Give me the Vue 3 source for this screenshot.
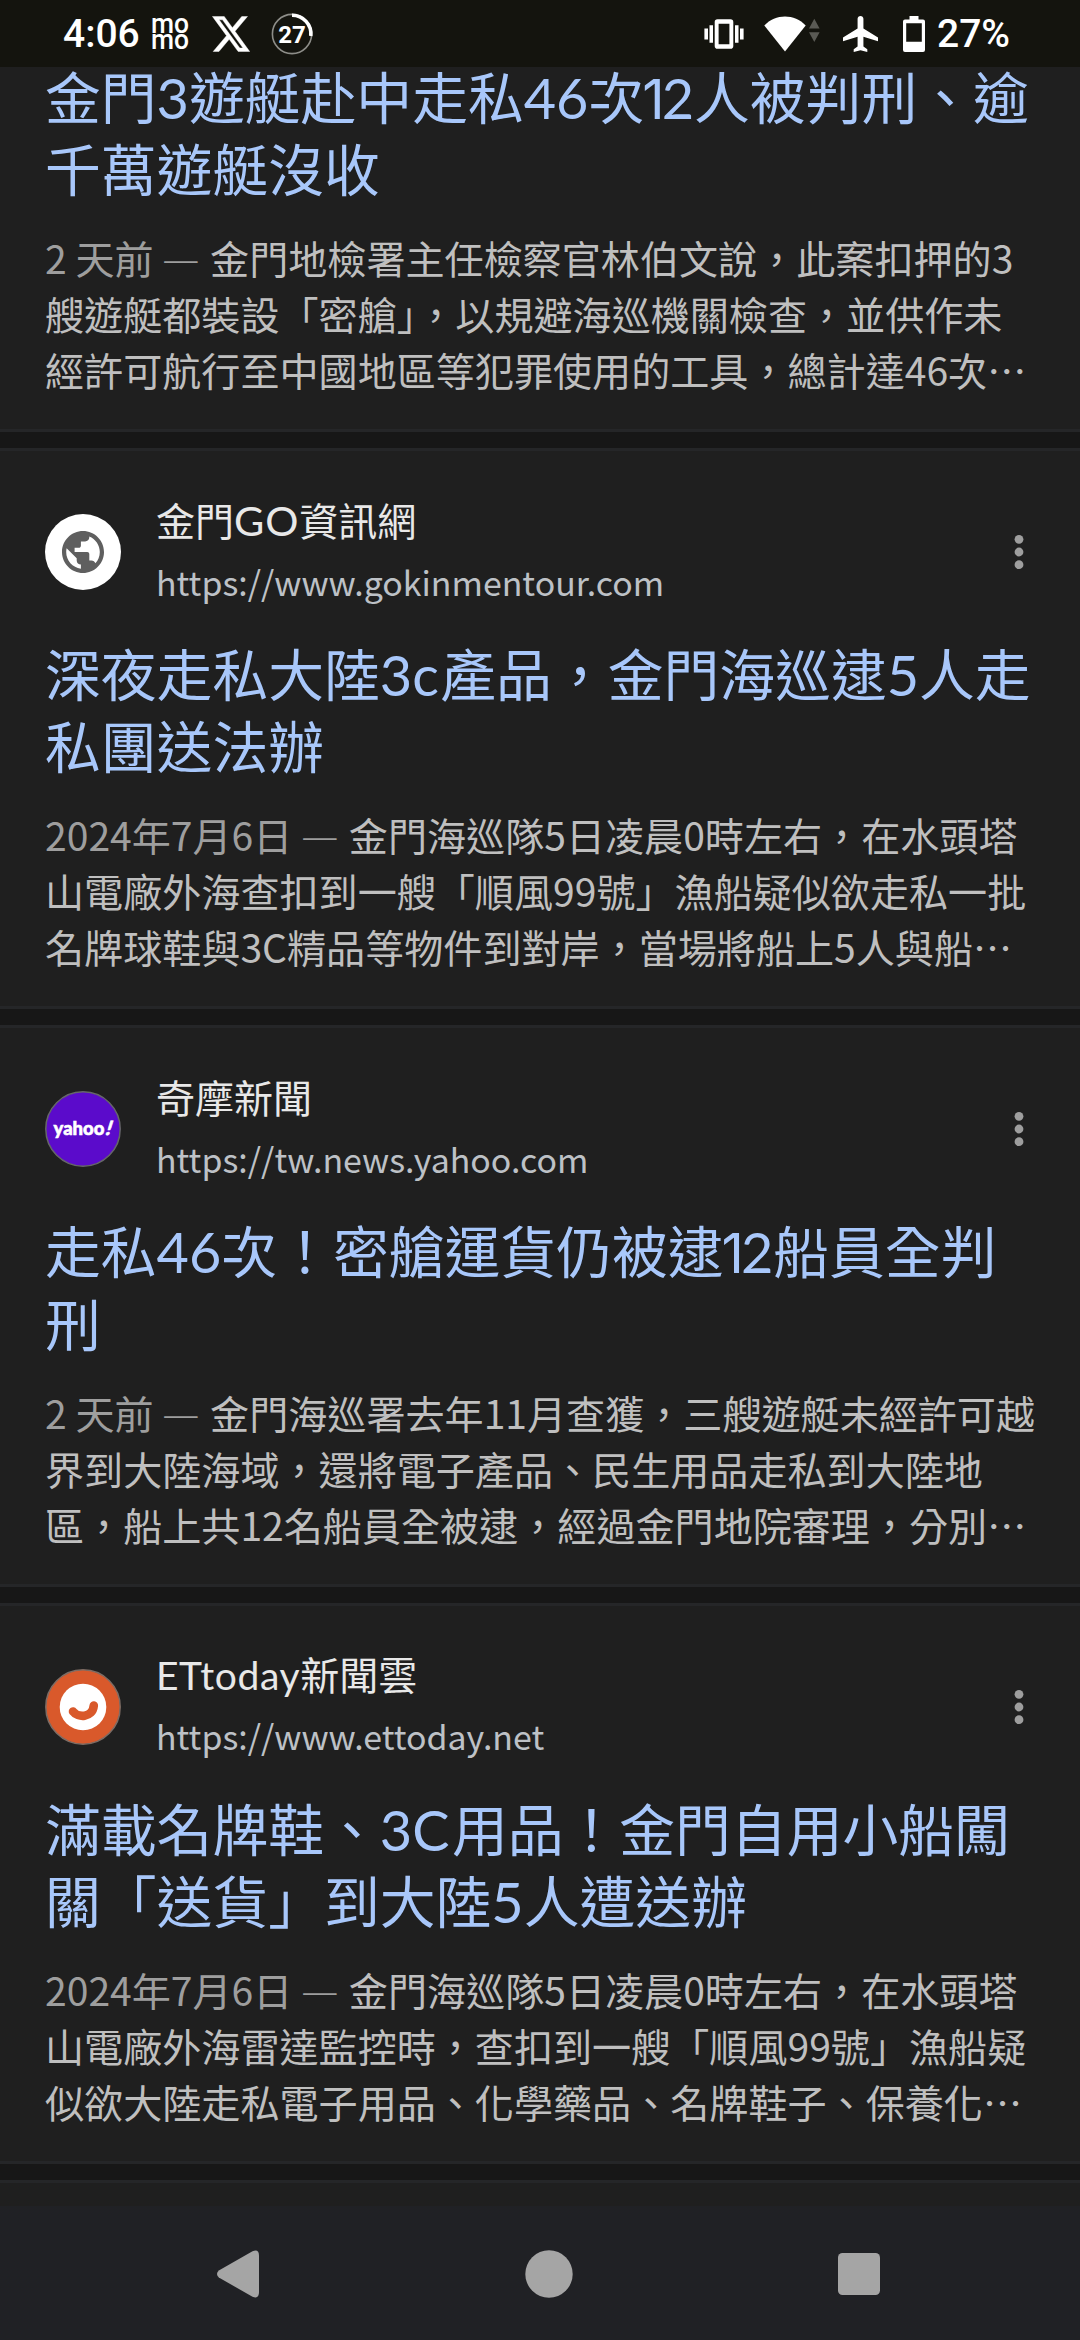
<script setup>
const results = [
  {
    id: 'first',
    title: ['金門3遊艇赴中走私46次12人被判刑、逾', '千萬遊艇沒收'],
    date: '2 天前',
    snippet: [
      '金門地檢署主任檢察官林伯文說，此案扣押的3',
      '艘遊艇都裝設「密艙」，以規避海巡機關檢查，並供作未',
      '經許可航行至中國地區等犯罪使用的工具，總計達46次…',
    ],
  },
  {
    id: 'go',
    site: '金門GO資訊網',
    url: 'https://www.gokinmentour.com',
    title: ['深夜走私大陸3c產品，金門海巡逮5人走', '私團送法辦'],
    date: '2024年7月6日',
    snippet: [
      '金門海巡隊5日凌晨0時左右，在水頭塔',
      '山電廠外海查扣到一艘「順風99號」漁船疑似欲走私一批',
      '名牌球鞋與3C精品等物件到對岸，當場將船上5人與船…',
    ],
  },
  {
    id: 'yahoo',
    site: '奇摩新聞',
    url: 'https://tw.news.yahoo.com',
    title: ['走私46次！密艙運貨仍被逮12船員全判', '刑'],
    date: '2 天前',
    snippet: [
      '金門海巡署去年11月查獲，三艘遊艇未經許可越',
      '界到大陸海域，還將電子產品、民生用品走私到大陸地',
      '區，船上共12名船員全被逮，經過金門地院審理，分別…',
    ],
  },
  {
    id: 'ettoday',
    site: 'ETtoday新聞雲',
    url: 'https://www.ettoday.net',
    title: ['滿載名牌鞋、3C用品！金門自用小船闖', '關「送貨」到大陸5人遭送辦'],
    date: '2024年7月6日',
    snippet: [
      '金門海巡隊5日凌晨0時左右，在水頭塔',
      '山電廠外海雷達監控時，查扣到一艘「順風99號」漁船疑',
      '似欲大陸走私電子用品、化學藥品、名牌鞋子、保養化…',
    ],
  },
]

// Split a string so that narrow "1" digits and Latin runs can be spaced on their own.
const runs = (text) =>
  text.split(/(1|[A-Za-z]+)/).filter(Boolean).map((t) => ({
    t,
    kind: t === '1' ? 'one' : /^[A-Z]{1,2}$/.test(t) ? 'caps' : /^[A-Za-z]/.test(t) ? 'latin' : '',
  }))
</script>

<template>
  <div class="screen">
    <header class="status">
      <span class="clock">4:06</span>
      <svg class="momo" width="38" height="40" viewBox="0 0 38 40">
        <text x="0" y="18.800" textLength="38" lengthAdjust="spacingAndGlyphs">mo</text>
        <text x="0" y="35.300" textLength="38" lengthAdjust="spacingAndGlyphs">mo</text>
      </svg>
      <svg class="xlogo" width="38" height="36" viewBox="1 2 22 20" preserveAspectRatio="none">
        <path d="M18.244 2.25h3.308l-7.227 8.26 8.502 11.24H16.17l-5.214-6.817L4.99 21.75H1.68l7.73-8.835L1.254 2.25H8.08l4.713 6.231zm-1.161 17.52h1.833L7.084 4.126H5.117z" fill="#fff" stroke="#fff" stroke-width=".25" />
      </svg>
      <svg class="ring" width="44" height="44" viewBox="0 0 44 44">
        <circle cx="22" cy="22" r="19.6" fill="none" stroke="#8d8d88" stroke-width="1.6" />
        <path d="M22 3.2A18.8 18.8 0 0 1 40.8 24" fill="none" stroke="#fff" stroke-width="3.6" />
        <text x="22" y="30.6" text-anchor="middle">27</text>
      </svg>
      <span class="spacer"></span>
      <svg class="vibrate" width="40" height="30" viewBox="0 0 40 30" fill="#fff">
        <path fill-rule="evenodd" d="M13.5 .3h13a2.8 2.8 0 0 1 2.8 2.8v23.8a2.8 2.8 0 0 1-2.8 2.8h-13a2.8 2.8 0 0 1-2.8-2.8V3.1A2.8 2.8 0 0 1 13.500 .3zM14.600 4.800v20.400h10.800V4.800z" />
        <path d="M.4 9.500h3.600v11H.4zM5.500 6.300h3.500v17.400H5.500zM31 6.300h3.500v17.400H31zM36 9.500h3.600v11H36z" />
      </svg>
      <svg class="wifi" width="56" height="36" viewBox="0 0 56 36">
        <path d="M21 35.500L.3 9.500C11.500-2.500 30.500-2.500 41.700 9.500z" fill="#fff" />
        <path d="M45 12.500l5.300-9.800 5.300 9.800zM45 16.200h10.600L50.300 26z" fill="#5a5a54" />
      </svg>
      <svg class="plane" width="35" height="36" viewBox="3 2 18 20" preserveAspectRatio="none">
        <path d="M21 16v-2l-7.500-5V3.500C13.500 2.670 12.830 2 12 2s-1.500.67-1.500 1.500V9L3 14v2l7.500-2.500V19L8.500 20.500V22L12 21l3.500 1v-1.500L13.500 19v-5.500z" fill="#fff" />
      </svg>
      <svg class="battery" width="22" height="36" viewBox="0 0 22 36">
        <path fill-rule="evenodd" d="M6.500 0h9v3.500H20a2 2 0 0 1 2 2V34a2 2 0 0 1-2 2H2a2 2 0 0 1-2-2V5.500a2 2 0 0 1 2-2h4.500zM3.200 7.300v18.500h15.600V7.300z" fill="#fff" />
      </svg>
      <span class="percent">27%</span>
    </header>

    <main class="feed">
      <article v-for="r in results" :key="r.id" class="card">
        <div v-if="r.site" class="source">
          <svg class="avatar" width="76" height="76" viewBox="0 0 76 76">
            <template v-if="r.id === 'go'">
              <circle cx="38" cy="38" r="38" fill="#fff" />
              <path transform="translate(12.800 12.800) scale(2.1)" d="M12 2C6.480 2 2 6.480 2 12s4.480 10 10 10 10-4.480 10-10S17.520 2 12 2zm-1 17.930c-3.950-.49-7-3.850-7-7.930 0-.62.08-1.210.21-1.790L9 15v1c0 1.100.9 2 2 2v1.930zm6.900-2.540c-.26-.81-1-1.390-1.900-1.390h-1v-3c0-.55-.45-1-1-1H8v-2h2c.55 0 1-.45 1-1V7h2c1.100 0 2-.9 2-2v-.41c2.930 1.190 5 4.060 5 7.410 0 2.080-.8 3.970-2.100 5.390z" fill="#5f5f5f" />
            </template>
            <template v-else-if="r.id === 'yahoo'">
              <circle cx="38" cy="38" r="37.200" fill="#5b0bcb" stroke="#66666a" stroke-width="1.500" />
              <text class="yahoo" x="8.500" y="43.500" textLength="51" lengthAdjust="spacingAndGlyphs">yahoo</text>
              <text class="yahoo bang" transform="translate(59.500 43.500) skewX(-18)">!</text>
            </template>
            <template v-else>
              <circle cx="38" cy="38" r="37.200" fill="#d9592b" stroke="#7d6c64" stroke-width="1.500" />
              <circle cx="38" cy="38" r="23.300" fill="#fff" />
              <path d="M28 42.500c4.500 6.200 19.500 7 20.800-6" fill="none" stroke="#d9592b" stroke-width="8.600" stroke-linecap="round" />
            </template>
          </svg>
          <div class="who">
            <span class="site"><span v-for="(p, i) in runs(r.site)" :key="i" :class="p.kind">{{ p.t }}</span></span>
            <span class="url">{{ r.url }}</span>
          </div>
          <svg class="more" width="10" height="36" viewBox="0 0 10 36" fill="#9e9e9e">
            <circle cx="5" cy="5.300" r="4.400" />
            <circle cx="5" cy="18" r="4.400" />
            <circle cx="5" cy="30.700" r="4.400" />
          </svg>
        </div>
        <h3 class="title">
          <span v-for="line in r.title" :key="line" class="line"><span v-for="(p, i) in runs(line)" :key="i" :class="p.kind">{{ p.t }}</span></span>
        </h3>
        <p class="snippet">
          <span v-for="(line, i) in r.snippet" :key="line" class="line"><span v-if="i === 0" class="date">{{ r.date }} <span class="dash">—</span></span>{{ line }}</span>
        </p>
      </article>
      <article class="card next"></article>
    </main>

    <nav class="navbar">
      <svg width="42" height="48" viewBox="0 0 42 48"><path d="M1.800 20.500L35.500 1.300Q42-1.500 42 6v36q0 7.500-6.500 4.700L1.800 27.500q-3.600-3.500 0-7z" fill="#a5a5a5" /></svg>
      <svg width="48" height="48" viewBox="0 0 48 48"><circle cx="24" cy="24" r="23.700" fill="#a5a5a5" /></svg>
      <svg width="42" height="42" viewBox="0 0 42 42"><rect width="42" height="42" rx="4.500" fill="#a5a5a5" /></svg>
    </nav>
  </div>
</template>

<style>
body {
  background: #171717;
}
</style>

<style scoped>
.screen {
  display: flex;
  flex-direction: column;
  width: 1080px;
  height: 2340px;
  overflow: hidden;
  background: #171717;
  font-family: "Noto Sans CJK TC", sans-serif;
}
svg {
  display: block;
  flex: none;
}
.status {
  position: relative;
  z-index: 1;
  display: flex;
  flex: none;
  align-items: center;
  box-sizing: border-box;
  height: 67px;
  padding: 0 72px 0 63px;
  background: #14140e;
  color: #fff;
  font: 500 39px/66px Roboto, sans-serif;
}
.clock {
  width: 88px;
}
.momo {
  overflow: visible;
  font: 500 27px Roboto, sans-serif;
  fill: #fff;
}
.xlogo {
  margin-left: 23px;
}
.ring {
  margin-left: 20px;
  font: 700 24px Roboto, sans-serif;
  fill: #fff;
}
.spacer {
  flex: 1;
}
.vibrate {
  margin-right: 20px;
}
.wifi {
  margin-right: 23px;
}
.plane {
  margin-right: 25px;
}
.battery {
  margin-right: 12px;
}
.percent {
  width: 71px;
  white-space: nowrap;
}
.feed {
  display: flex;
  flex: 1;
  flex-direction: column;
  gap: 16px;
  min-height: 0;
  overflow: hidden;
}
.card {
  flex: none;
  box-sizing: border-box;
  height: 561.33px;
  padding: 0 45px;
  border: solid #252628;
  border-width: 3px 0;
  background: #1f1f1f;
}
.card:first-child {
  height: 370.500px;
  margin-top: -5.500px;
  border-top: 0;
}
.next {
  height: 100px;
}
.source {
  display: flex;
  align-items: center;
  height: 202px;
  margin-bottom: -14px;
}
.yahoo {
  fill: #fff;
  stroke: #fff;
  stroke-width: 0.600;
  font: 900 19.500px Lato, sans-serif;
}
.who {
  display: flex;
  flex: 1;
  flex-direction: column;
  margin-left: 35px;
  white-space: nowrap;
}
.site {
  color: #e8e8e8;
  font: 400 39px/58px Lato, "Noto Sans CJK TC", sans-serif;
}
.site .caps {
  font-size: 41.500px;
  letter-spacing: 0.800px;
  line-height: 1;
}
.site .latin {
  letter-spacing: 0.600px;
}
.url {
  color: #bdc1c6;
  font-size: 33.900px;
  line-height: 63px;
}
.more {
  margin-right: 11px;
}
.title {
  margin: 0;
  color: #a8c7fa;
  font: 400 55.800px/72.200px Lato, "Noto Sans CJK TC", sans-serif;
}
.title .one {
  margin-left: -2px;
  font-family: Inter, sans-serif;
  font-size: 55px;
  letter-spacing: -3px;
  line-height: 1;
}
.title .caps {
  letter-spacing: 2.500px;
}
.title .latin {
  letter-spacing: 1.500px;
}
.line {
  display: block;
  white-space: nowrap;
}
.snippet {
  margin: 23px 0 0;
  color: #bfbfbf;
  font-size: 39.100px;
  line-height: 56px;
}
.date {
  color: #9e9e9e;
}
.dash {
  margin-right: 10.500px;
  font-size: 42px;
  font-weight: 300;
  line-height: 1;
}
.navbar {
  display: flex;
  flex: none;
  align-items: center;
  justify-content: space-between;
  box-sizing: border-box;
  height: 134px;
  padding: 2px 200px 0 217px;
  background: #202125;
}
</style>
